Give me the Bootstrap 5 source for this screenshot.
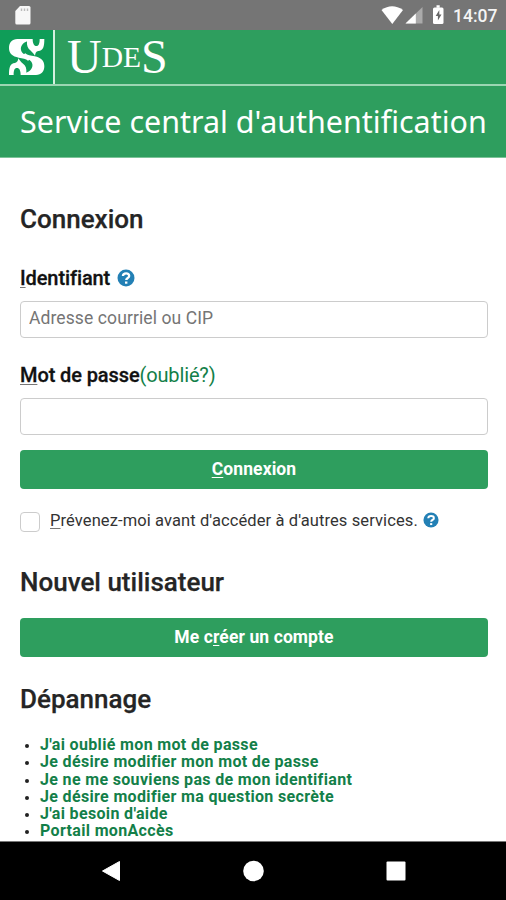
<!DOCTYPE html>
<html lang="fr">
<head>
<meta charset="utf-8">
<meta name="viewport" content="width=device-width, initial-scale=1">
<title>Service central d'authentification</title>
<link href="https://cdn.jsdelivr.net/npm/bootstrap@5.3.0/dist/css/bootstrap.min.css" rel="stylesheet">
<style>
body{font-family:Roboto,"Liberation Sans",sans-serif;color:#222;background:#fff}
.screen{width:506px;height:900px}
.status-bar{height:30px;background:#757575}
.clock{font-size:17.5px;line-height:32px;font-weight:500;color:#f4f4f4;margin-left:-1px}
.brand-bar{height:54px;background:#2e9e5e}
.brand-mark{width:53px;background:#0f9d58}
.brand-sep{width:2px;background:#d5f0df}
.brand-name{font-family:"Liberation Serif",serif;color:#fff;height:54px;line-height:54px;padding-left:12px}
.brand-name .cap{font-size:48px}
.brand-name .small-cap{font-size:29.5px;line-height:1;vertical-align:6px}
.title-bar{height:74px;background:#2e9e5e;border-top:2px solid #9bd6b2;border-bottom:1px solid #7cc398}
.title-bar h1{font-family:"Noto Sans","Open Sans",sans-serif;font-size:30.45px;line-height:71px;font-weight:400}
.page-body{padding:0 18px 0 20px}
h2{font-size:26px;line-height:30px;font-weight:500;color:#252525;-webkit-text-stroke:.25px #252525}
.field-label{font-size:20px;line-height:24px;color:#111}
.field-label b{font-weight:500;letter-spacing:-.1px;-webkit-text-stroke:.3px #111}
.field-label .g-link{letter-spacing:-.15px}
.key{text-decoration:underline;text-decoration-thickness:1px;text-underline-offset:2px}
.field-label .key,.notice .key{text-decoration-color:#777}
.g-link{color:#137f49;text-decoration:none}
.form-control{height:37px;border:1.5px solid #ccc;border-radius:4px;padding:0 8px 3px;font-size:17.5px;color:#333;letter-spacing:.1px}
.form-control::placeholder{color:#757575;opacity:1}
.btn-udes{height:39px;background:#2e9e5e;color:#fff;border:0;border-radius:4px;padding:0;font-size:17.5px;font-weight:700;letter-spacing:.1px}
.form-check-input{width:20px;height:20px;border:1.5px solid #ccc;border-radius:4px}
.notice{font-size:16.5px;line-height:20px;color:#333;padding-left:10px;letter-spacing:.1px}
.help-list{font-size:16px;line-height:17.25px;font-weight:700;padding-left:20px;letter-spacing:.34px}
.help-list li::marker{font-size:14px}
.nav-keys{height:59px;background:#000;border-top:1px solid #777}
</style>
</head>
<body>
<div class="screen d-flex flex-column overflow-hidden">
  <div class="status-bar d-flex flex-shrink-0">
    <svg width="380" height="30" class="flex-shrink-0"><path d="M20 6h9q1.500 0 1.500 1.500v15.500q0 1.500-1.500 1.500h-12.200q-1.500 0-1.500-1.500v-12z" fill="#f7f7f7"/><path d="M21.500 8.500v2.500M24.500 8.500v2.500M27.500 8.500v2.500" stroke="#bbb" stroke-width="1.400"/></svg>
    <svg width="74" height="30" class="flex-shrink-0"><path d="M1.500 10Q12 2.500 23 10L12.300 24z" fill="#fff"/><path d="M42.500 7v16.500H25.500z" fill="#aaa"/><path d="M35.800 13.600v9.900H25.500z" fill="#fff"/><path d="M56.500 6.500h3.200" stroke="#fff" stroke-width="2.500"/><rect x="53" y="7.500" width="10.500" height="16.500" rx="1.500" fill="#fff"/><path d="M59.300 10l-3.600 6h2.200v4.500l3.600-6h-2.200z" fill="#666"/></svg>
    <span class="clock">14:07</span>
  </div>
  <div class="brand-bar d-flex flex-shrink-0">
    <div class="brand-mark"><svg class="d-block" width="53" height="54" viewBox="0 0 159 162"><defs><g id="half-mark"><path d="M84 27H52C36 27 27 38 27 54C27 71 38 79 56 83C68 85 78 85 84 92L97 84C78 78 65 71 63 60C61 49 68 38 84 33z"/><path d="M82 27H98C98 40 102 48 109 48C117 48 119 40 119 27H133C133 50 130 62 115 63C108 64 106 70 105 77C100 68 92 62 86 56C80 48 80 38 82 27z"/></g></defs><g fill="#fff"><use href="#half-mark"/><use href="#half-mark" transform="rotate(180 80 81)"/></g></svg></div>
    <div class="brand-sep"></div>
    <div class="brand-name text-nowrap"><span class="cap">U</span><span class="small-cap">DE</span><span class="cap">S</span></div>
  </div>
  <header class="title-bar flex-shrink-0 text-white"><h1 class="m-0 ps-3 ms-1 text-nowrap">Service central d'authentification</h1></header>
  <main class="page-body flex-grow-1 overflow-hidden d-flex flex-column">
    <h2 class="mb-0" style="margin-top:46px">Connexion</h2>
    <label for="uid" class="field-label d-flex align-items-center" style="margin-top:32px"><b><span class="key">I</span>dentifiant</b>
      <svg style="margin-left:7px" width="18" height="18" viewBox="0 0 18 18"><circle cx="9" cy="9" r="8.500" fill="#2380b5"/><path d="M5.900 7C6.200 3.600 12.200 3.500 12.200 6.900C12.200 9 9.200 8.900 9.200 11.100" fill="none" stroke="#fff" stroke-width="2.300"/><path d="M8 12.500h2.400v2.200H8z" fill="#fff"/></svg></label>
    <input id="uid" class="form-control flex-shrink-0" placeholder="Adresse courriel ou CIP" style="margin-top:11px">
    <label for="pwd" class="field-label" style="margin-top:25px"><b><span class="key">M</span>ot de passe</b><a class="g-link" href="#">(oublié?)</a></label>
    <input id="pwd" type="password" class="form-control flex-shrink-0" style="margin-top:11px">
    <button class="btn btn-udes w-100 flex-shrink-0" style="margin-top:15px"><span class="key">C</span>onnexion</button>
    <div class="d-flex align-items-start" style="margin-top:22px">
      <input id="warn" type="checkbox" class="form-check-input m-0 flex-shrink-0" style="margin-top:1px!important">
      <label for="warn" class="notice text-nowrap"><span class="key">P</span>révenez-moi avant d'accéder à d'autres services.</label>
      <svg style="margin:1px 0 0 5px" width="16" height="16" viewBox="0 0 18 18"><circle cx="9" cy="9" r="8.500" fill="#2380b5"/><path d="M5.900 7C6.200 3.600 12.200 3.500 12.200 6.900C12.200 9 9.200 8.900 9.200 11.100" fill="none" stroke="#fff" stroke-width="2.300"/><path d="M8 12.500h2.400v2.200H8z" fill="#fff"/></svg>
    </div>
    <h2 class="mb-0" style="margin-top:35px">Nouvel utilisateur</h2>
    <button class="btn btn-udes w-100 flex-shrink-0" style="margin-top:21px">Me c<span class="key">r</span>éer un compte</button>
    <h2 class="mb-0" style="margin-top:27px">Dépannage</h2>
    <ul class="help-list mb-0" style="margin-top:22px">
      <li><a class="g-link" href="#">J'ai oublié mon mot de passe</a></li>
      <li><a class="g-link" href="#">Je désire modifier mon mot de passe</a></li>
      <li><a class="g-link" href="#">Je ne me souviens pas de mon identifiant</a></li>
      <li><a class="g-link" href="#">Je désire modifier ma question secrète</a></li>
      <li><a class="g-link" href="#">J'ai besoin d'aide</a></li>
      <li><a class="g-link" href="#">Portail monAccès</a></li>
    </ul>
  </main>
  <div class="nav-keys flex-shrink-0"><svg class="d-block" width="506" height="58" viewBox="0 842 506 58"><g fill="#fff"><path d="M102.500 871L119.500 861.500V880.500z" stroke="#fff" stroke-linejoin="round"/><circle cx="253.500" cy="871" r="10.300"/><rect x="386.500" y="861.500" width="19" height="19" rx="1"/></g></svg></div>
</div>
<script src="https://cdn.jsdelivr.net/npm/bootstrap@5.3.0/dist/js/bootstrap.bundle.min.js"></script>
</body>
</html>
